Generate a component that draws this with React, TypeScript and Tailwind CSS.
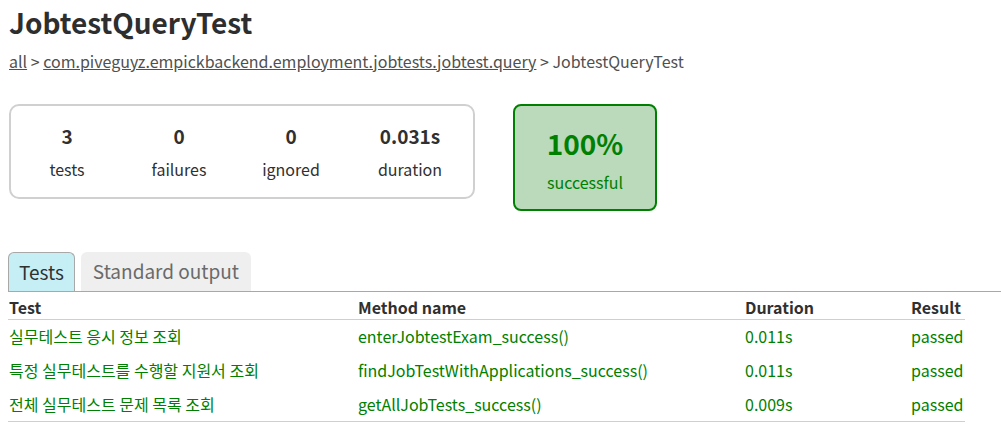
import React from "react";

const counters = [
  { value: "3", label: "tests", w: "w-[112px]" },
  { value: "0", label: "failures", w: "w-[112px]" },
  { value: "0", label: "ignored", w: "w-[112px]" },
  { value: "0.031s", label: "duration", w: "w-[126px]" },
];

const rows = [
  { name: "실무테스트 응시 정보 조회", method: "enterJobtestExam_success()", duration: "0.011s" },
  { name: "특정 실무테스트를 수행할 지원서 조회", method: "findJobTestWithApplications_success()", duration: "0.011s" },
  { name: "전체 실무테스트 문제 목록 조회", method: "getAllJobTests_success()", duration: "0.009s" },
];

export default function App() {
  return (
    <div
      className="w-[1001px] h-[433px] overflow-hidden bg-white text-[#303030] pl-[8px]"
      style={{ fontFamily: '"Noto Sans CJK KR", "Noto Sans", sans-serif' }}
    >
      {/* title + breadcrumbs */}
      <h1 className="text-[28px] font-bold leading-[28px] pt-[8px] pl-[1px] text-[#2e2e2e]">JobtestQueryTest</h1>
      <div className="mt-[15px] text-[16px] leading-[20px] pl-[1px] text-[#505050]">
        <a className="underline">all</a> &gt;{" "}
        <a className="underline">com.piveguyz.empickbackend.employment.jobtests.jobtest.query</a> &gt; JobtestQueryTest
      </div>

      {/* summary */}
      <div className="flex items-start mt-[33px] pl-[1px]">
        <div className="flex border-2 border-[#d0d0d0] rounded-[10px] h-[95px] items-center">
          {counters.map((c) => (
            <div key={c.label} className={`${c.w} flex flex-col items-center`}>
              <div className="text-[19px] font-bold leading-[22px]">{c.value}</div>
              <div className="text-[16px] leading-[20px] mt-[12px]">{c.label}</div>
            </div>
          ))}
        </div>
        <div className="ml-[38px] w-[144px] h-[107px] border-2 border-[#008000] rounded-[8px] bg-[#bbd9bb] text-[#008000] flex flex-col items-center pt-[21px]">
          <div className="text-[28px] font-bold leading-[32px]">100%</div>
          <div className="text-[16px] leading-[20px] mt-[13px]">successful</div>
        </div>
      </div>

      {/* tabs */}
      <div className="flex items-end mt-[41px] border-b border-[#a8a8a8] h-[40px]">
        <div className="h-[39px] px-[10px] bg-[#c5eff5] border border-b-0 border-[#a8a8a8] rounded-t-[6px] text-[19px] leading-[38px] text-[#303030]">
          Tests
        </div>
        <div className="ml-[6px] h-[39px] px-[12px] bg-[#efefef] rounded-t-[6px] text-[19px] leading-[38px] text-[#6a6a6a]">
          Standard output
        </div>
      </div>

      {/* table */}
      <table className="border-collapse text-[16px] w-[957px]">
        <thead>
          <tr className="border-b border-[#cfcfcf] h-[27px]">
            <th className="w-[350px] text-left font-bold pl-[1px] leading-[20px] pt-[4px]">Test</th>
            <th className="w-[387px] text-left font-bold leading-[20px] pt-[4px]">Method name</th>
            <th className="w-[166px] text-left font-bold leading-[20px] pt-[4px]">Duration</th>
            <th className="text-left font-bold leading-[20px] pt-[4px]">Result</th>
          </tr>
        </thead>
        <tbody className="text-[#008000]">
          {rows.map((r, i) => (
            <tr key={r.method} className={i === rows.length - 1 ? "h-[34px] border-b border-[#cfcfcf]" : "h-[34px]"}>
              <td className="pl-[1px] leading-[20px]">{r.name}</td>
              <td className="leading-[20px]">{r.method}</td>
              <td className="leading-[20px]">{r.duration}</td>
              <td className="leading-[20px]">passed</td>
            </tr>
          ))}
        </tbody>
      </table>
    </div>
  );
}
